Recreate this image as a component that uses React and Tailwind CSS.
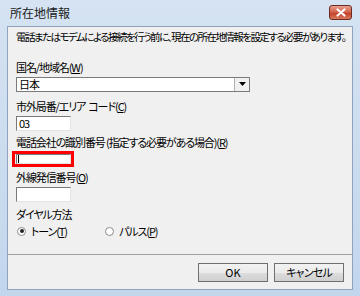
import React from "react";

const font = { fontFamily: '"Noto Sans CJK JP", "Noto Sans", sans-serif' };

function Input({ value, w = "w-[55px]", cursor }) {
  return (
    <div className={`${w} h-[15px] bg-white border border-t-[#7a7a7a] border-l-[#7a7a7a] border-r-[#e3e3e3] border-b-[#e3e3e3] flex items-center px-[2px] text-[11px] leading-none`}>
      {value}
      {cursor && <div className="w-px h-[10px] bg-black" />}
    </div>
  );
}

export default function App() {
  return (
    <div
      className="w-[360px] h-[296px] bg-[linear-gradient(#d5e3f2,#c2d6ec)] flex flex-col text-black [font-feature-settings:'palt']"
      style={font}
    >
      <div className="h-[26px] flex items-center justify-between pl-[10px] pr-[8px] shrink-0">
        <span className="text-[12px] text-[#1a1a1a]">所在地情報</span>
        <div className="w-[23px] h-[15px] mt-[-2px] rounded-[3px] border border-[#6d2a22] bg-[linear-gradient(#e9a391,#cf5a44_50%,#c23a22_51%,#d77a5e)] flex items-center justify-center">
          <svg width="10" height="9" viewBox="0 0 10 9">
            <path d="M1.5 1.5 L8.5 7.5 M8.5 1.5 L1.5 7.5" stroke="#fff" strokeWidth="2.2" strokeLinecap="round" />
          </svg>
        </div>
      </div>
      <div className="mx-[7px] h-[264px] bg-[#f0f0f0] border border-[#8ea4be] flex flex-col text-[11px] leading-none tracking-[-1.1px]">
        <div className="pl-[8px] pt-[5px] whitespace-nowrap text-[10.5px] tracking-[-1.55px]">電話またはモデムによる接続を行う前に、現在の所在地情報を設定する必要があります。</div>
        <div className="pl-[8px] pt-[19px]">国名/地域名(<u>W</u>)</div>
        <div className="ml-[8px] mt-[4px] w-[234px] h-[15px] bg-white border border-[#7a7a7a] flex items-center justify-between">
          <span className="pl-[2px]">日本</span>
          <div className="w-[15px] h-[13px] bg-[#f0f0f0] border-l border-[#b0b0b0] flex items-center justify-center">
            <svg width="7" height="4" viewBox="0 0 7 4"><path d="M0 0h7L3.5 4z" fill="#000" /></svg>
          </div>
        </div>
        <div className="pl-[8px] pt-[9px]">市外局番/エリア<span className="ml-[3px]">コード(<u>C</u>)</span></div>
        <div className="ml-[8px] mt-[4px]"><Input value="03" /></div>
        <div className="pl-[8px] pt-[6px] whitespace-nowrap">電話会社の識別番号 (指定する必要がある場合)(<u>R</u>)</div>
        <div className="ml-[4px] mt-[3px] w-[62px] h-[16px] border-[3px] border-[#ff0000] flex items-center justify-center">
          <div className="w-[55px] h-[10px] bg-white border border-t-[#7a7a7a] border-l-[#7a7a7a] border-r-[#e3e3e3] border-b-[#e3e3e3] flex items-center px-[1px]">
            <div className="w-px h-[8px] bg-black" />
          </div>
        </div>
        <div className="pl-[8px] pt-[5px]">外線発信番号(<u>O</u>)</div>
        <div className="ml-[8px] mt-[4px]"><Input value="" /></div>
        <div className="pl-[8px] pt-[7px]">ダイヤル方法</div>
        <div className="pl-[9px] pt-[6px] flex items-center">
          <div className="flex items-center gap-[5px] w-[88px]">
            <div className="w-[9px] h-[9px] rounded-full bg-white border border-[#8a8a8a] flex items-center justify-center">
              <div className="w-[4px] h-[4px] rounded-full bg-[#222]" />
            </div>
            <span>トーン(<u>T</u>)</span>
          </div>
          <div className="flex items-center gap-[5px]">
            <div className="w-[9px] h-[9px] rounded-full bg-white border border-[#8a8a8a]" />
            <span>パルス(<u>P</u>)</span>
          </div>
        </div>
        <div className="mt-auto border-t border-[#a0a0a0] h-[35px] flex items-center justify-end pr-[8px] gap-[6px] tracking-normal">
          <div className="w-[70px] h-[19px] border border-[#707070] bg-[linear-gradient(#f2f2f2,#ebebeb_50%,#dddddd_51%,#cfcfcf)] flex items-center justify-center">OK</div>
          <div className="w-[70px] h-[19px] border border-[#707070] bg-[linear-gradient(#f2f2f2,#ebebeb_50%,#dddddd_51%,#cfcfcf)] flex items-center justify-center tracking-[-0.8px]">キャンセル</div>
        </div>
      </div>
      <div className="h-[6px] shrink-0" />
    </div>
  );
}
